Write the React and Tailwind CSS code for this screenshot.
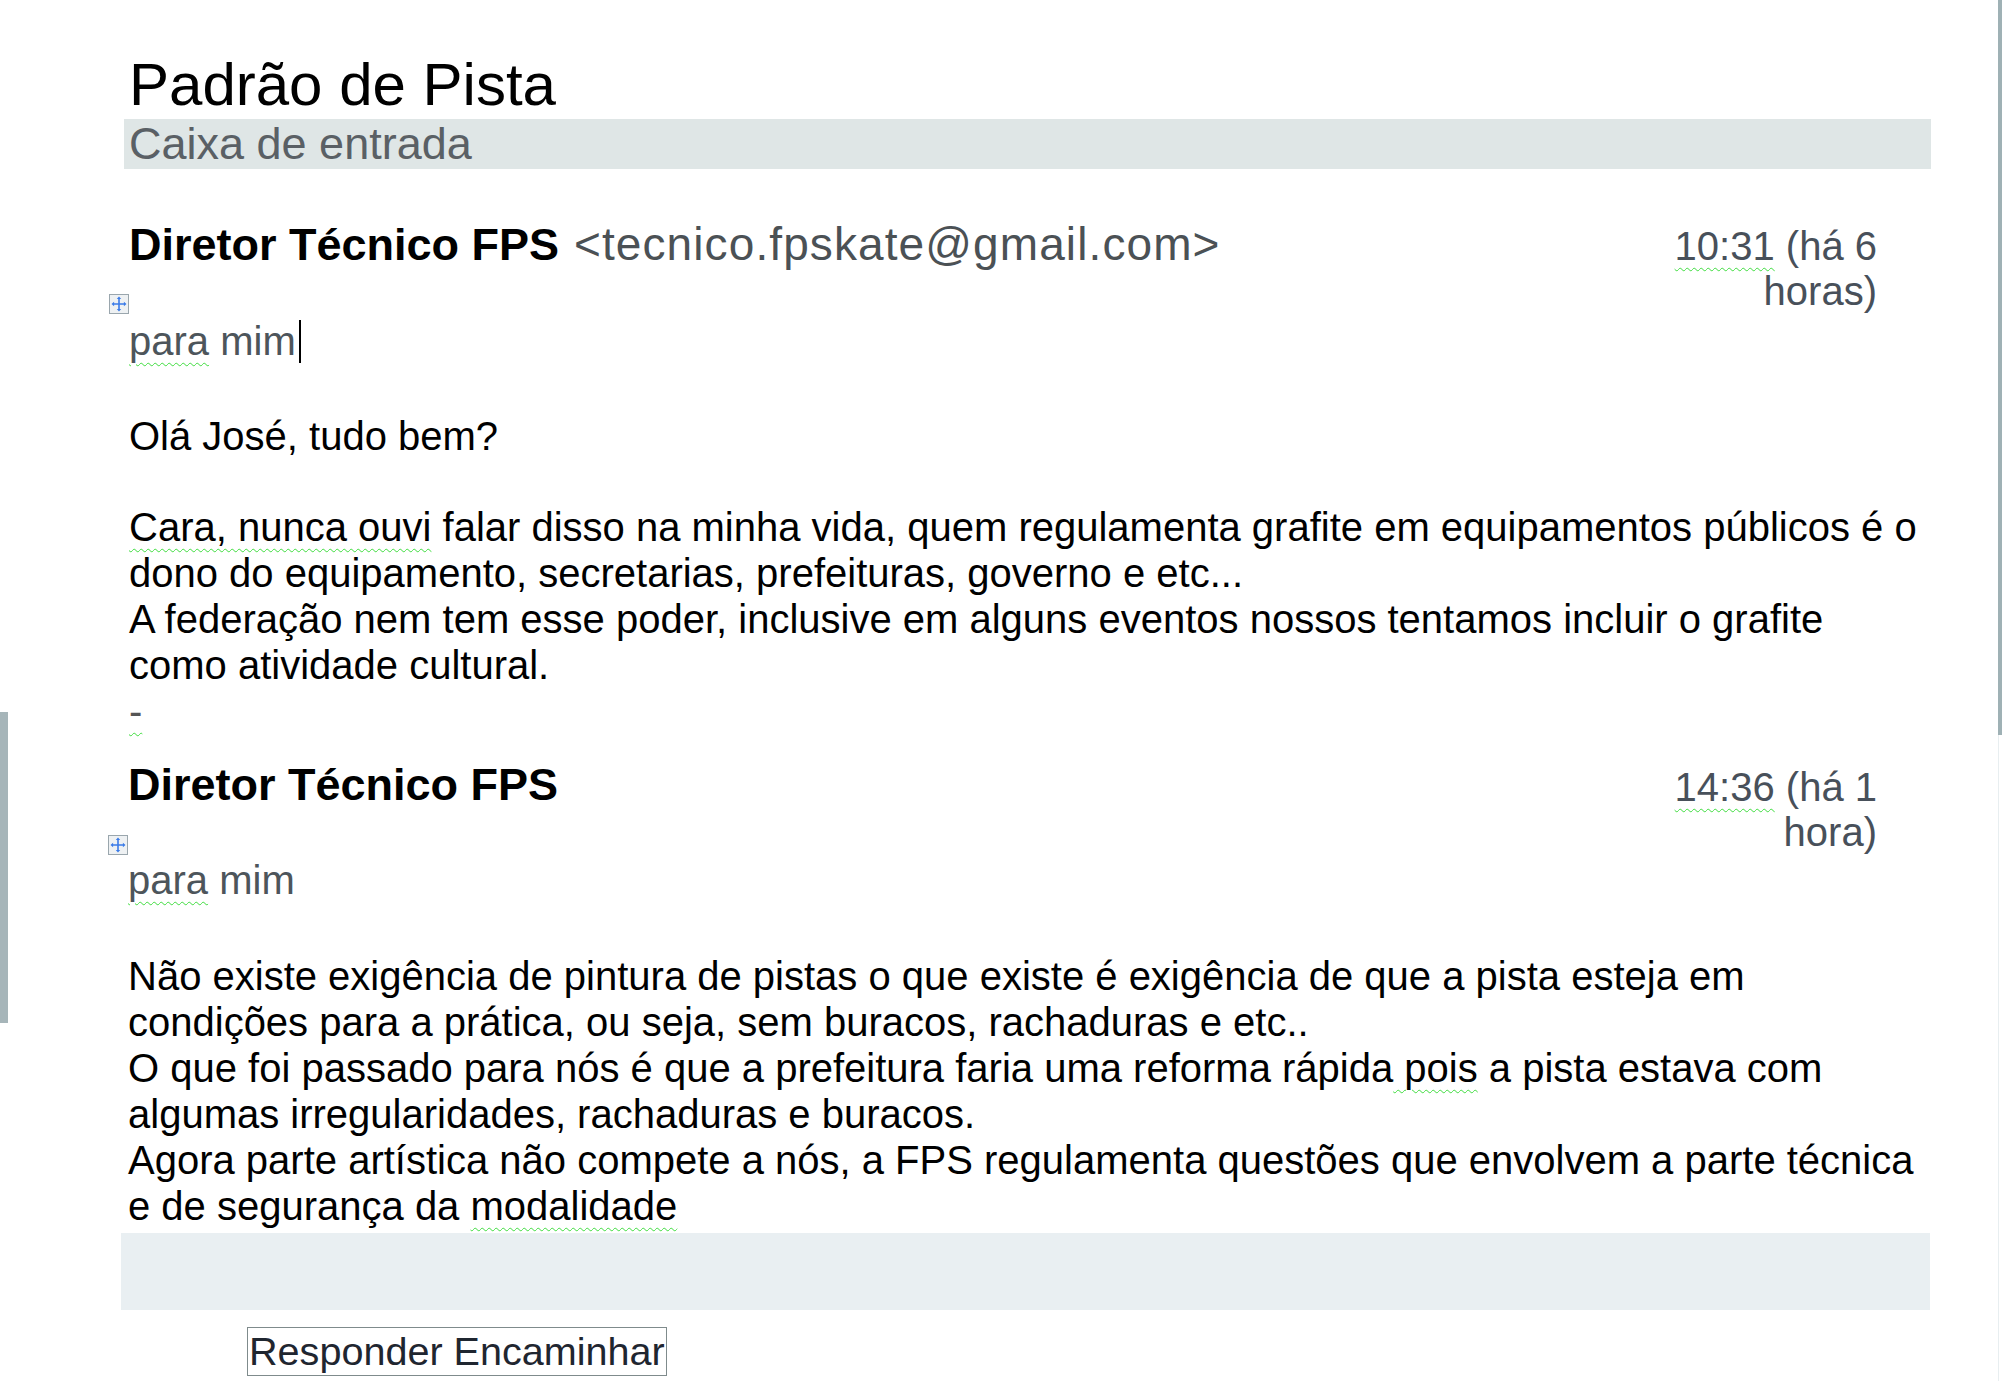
import React from "react";

const font = "font-['Liberation_Sans',Arial,sans-serif]";
const wavy = "underline decoration-wavy decoration-[#3fdc3f] decoration-1 underline-offset-[7px]";

// small table-move handle that Word draws beside a table
const MoveHandle = () => (
  <svg width="20" height="20" viewBox="0 0 20 20" className="-ml-[20px]">
    <rect x="0.5" y="0.5" width="19" height="19" fill="#eef1f3" stroke="#9aa6ad" />
    <path d="M10 4v12M4 10h12" stroke="#3b7be8" strokeWidth="1.6" />
    <path d="M10 2.5l-2.2 2.6h4.4zM10 17.5l-2.2-2.6h4.4zM2.5 10l2.6-2.2v4.4zM17.5 10l-2.6-2.2v4.4z" fill="#3b7be8" />
  </svg>
);

const Header = ({ email, time, ago, rest }) => (
  <div className="flex items-start h-[76px]">
    <div className="text-[45px] leading-[52px] whitespace-nowrap">
      <span className="font-bold text-black">Diretor Técnico FPS</span>
      {email && (
        <span className="ml-[1px] text-[46px] tracking-[1.1px] text-[#4b5155]"> {email}</span>
      )}
    </div>
    <div className="ml-auto mr-[54px] w-[210px] pt-[6px] text-right text-[40px] leading-[45px] text-[#48505a]">
      <div className="whitespace-nowrap">
        <span className={wavy}>{time}</span> {ago}
      </div>
      <div>{rest}</div>
    </div>
  </div>
);

const Lines = ({ lines }) => (
  <div className="text-[40px] leading-[46px] text-black">
    {lines.map((l, i) => (
      <div key={i} className="whitespace-nowrap">{l}</div>
    ))}
  </div>
);

export default function App() {
  return (
    <div className={`${font} w-[2004px] h-[1381px] overflow-hidden bg-white flex`}>
      {/* left window edge */}
      <div className="w-[8px] shrink-0">
        <div className="mt-[712px] h-[311px] w-[8px] bg-[#a6b5b9]" />
      </div>

      <div className="ml-[116px] w-[1807px] shrink-0 pt-[55px]">
        <h1 className="pl-[5px] text-[60px] leading-[60px] text-black">Padrão de Pista</h1>
        <div className="mt-[4px] h-[50px] bg-[#dfe6e6] pl-[5px] text-[45px] leading-[50px] text-[#5a6065]">
          Caixa de entrada
        </div>

        {/* first message */}
        <div className="mt-[49px] pl-[5px]">
          <Header email="<tecnico.fpskate@gmail.com>" time="10:31" ago="(há 6" rest="horas)" />
          <MoveHandle />
          <div className="mt-[5px] flex items-start text-[40px] leading-[45px] text-[#4d555b]">
            <span>
              <span className={wavy}>para</span> mim
            </span>
            <div className="ml-[3px] mt-[1px] h-[43px] w-[2px] bg-black" />
          </div>
          <div className="mt-[49px]">
            <Lines lines={["Olá José, tudo bem?"]} />
          </div>
          <div className="mt-[45px]">
            <Lines
              lines={[
                <>
                  <span className={wavy}>Cara, nunca ouvi</span> falar disso na minha vida, quem regulamenta grafite em equipamentos públicos é o
                </>,
                "dono do equipamento, secretarias, prefeituras, governo e etc...",
                "A federação nem tem esse poder, inclusive em alguns eventos nossos tentamos incluir o grafite",
                "como atividade cultural.",
                <span className={`${wavy} text-[#555]`}>-</span>,
              ]}
            />
          </div>
        </div>

        {/* second message */}
        <div className="mt-[25px] pl-[4px]">
          <Header time="14:36" ago="(há 1" rest="hora)" />
          <MoveHandle />
          <div className="mt-[3px] text-[40px] leading-[45px] text-[#4d555b]">
            <span className={wavy}>para</span> mim
          </div>
          <div className="mt-[50px]">
            <Lines
              lines={[
                "Não existe exigência de pintura de pistas o que existe é exigência de que a pista esteja em",
                "condições para a prática, ou seja, sem buracos, rachaduras e etc..",
                <>
                  O que foi passado para nós é que a prefeitura faria uma reforma rápida<span className={wavy}> pois</span> a pista estava com
                </>,
                "algumas irregularidades, rachaduras e buracos.",
                "Agora parte artística não compete a nós, a FPS regulamenta questões que envolvem a parte técnica",
                <>
                  e de segurança da <span className={wavy}>modalidade</span>
                </>,
              ]}
            />
          </div>
        </div>

        <div className="mt-[4px] -ml-[3px] h-[77px] w-[1809px] bg-[#e9eff2]" />

        <div className="mt-[17px] ml-[123px] inline-block border border-[#7f8b8c] bg-white px-[1px] text-[39.6px] leading-[47px] text-[#1f2630] whitespace-nowrap">
          Responder Encaminhar
        </div>
      </div>

      {/* right window edge */}
      <div className="ml-auto mr-[2px] flex flex-col">
        <div className="h-[735px] w-[4px] bg-[#9fb1b5]" />
        <div className="flex-1 w-[1px] bg-[#e8eef0]" />
      </div>
    </div>
  );
}
